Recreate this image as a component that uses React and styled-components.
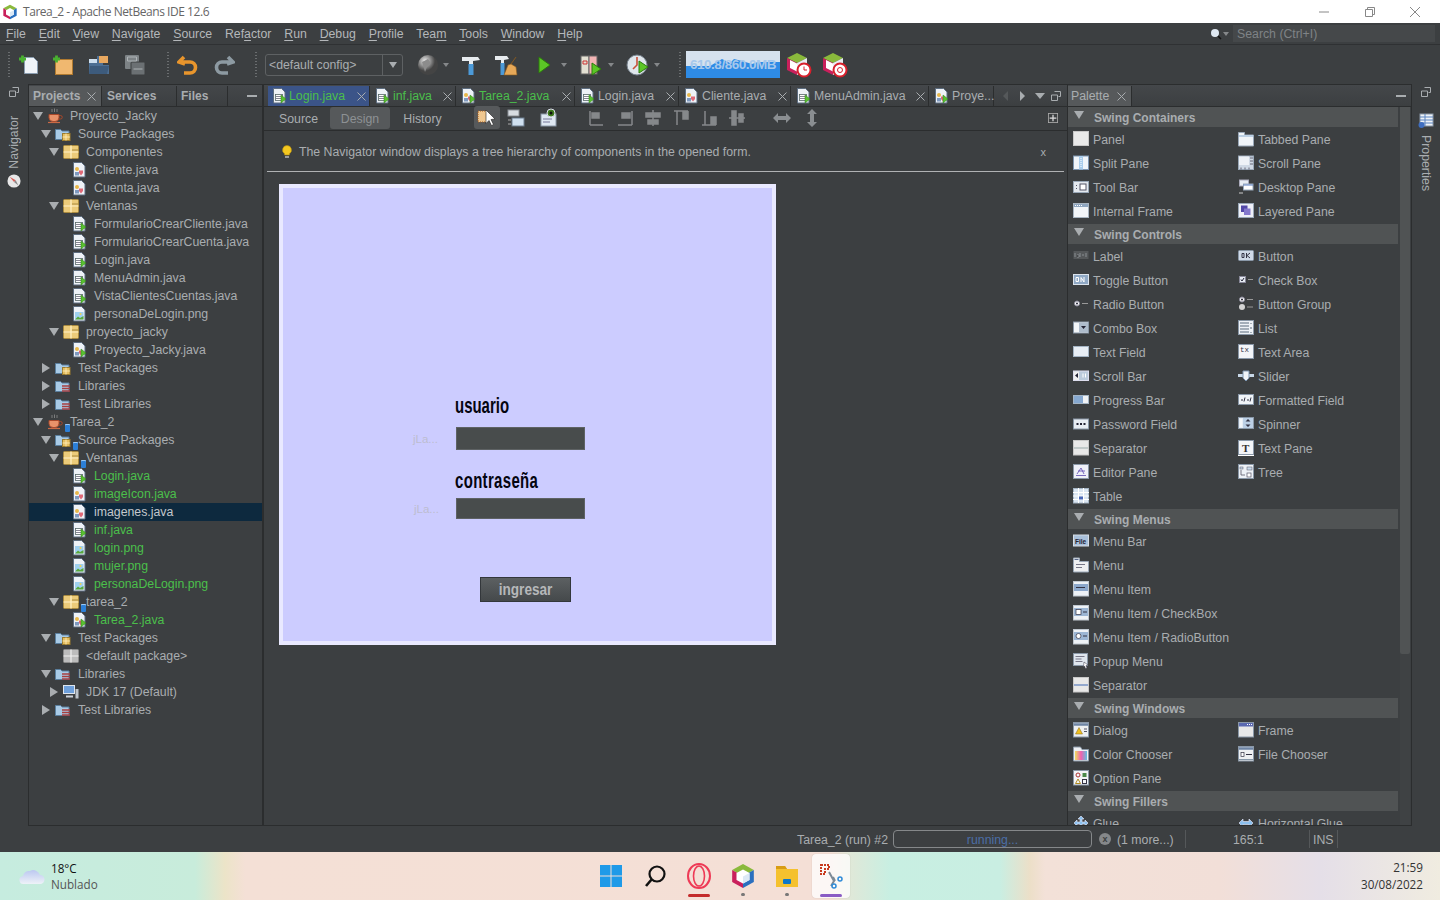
import React from "react";
import styled, { createGlobalStyle } from "styled-components";

const Global = createGlobalStyle`
  html, body { margin: 0; padding: 0; background: #3c3f41; }
  * { box-sizing: border-box; }
  #root { width: 1440px; height: 900px; overflow: hidden; }
`;

const Page = styled.div`
  width: 1440px; height: 900px; display: flex; flex-direction: column; overflow: hidden;
  background: #3c3f41; color: #a9adb0; font: 12.3px "Liberation Sans", Arial, sans-serif;
`;

/* ---------- shared drawings ---------- */
const Svg = ({ s = 16, w, h, vb, children }) => (
  <svg width={w || s} height={h || s} viewBox={vb || "0 0 16 16"} style={{ display: "block", flex: "none" }}>{children}</svg>
);
const Page16 = () => <path d="M2.5 .5h8l3.5 3.5v11h-11.500z" fill="#eef2f7" stroke="#5d6d80" />;
const Arrow = ({ x = 9, y = 7 }) => <path d={`M${x} ${y}l5 4-5 4z`} fill="#58c030" stroke="#2e7d14" strokeWidth=".5" />;
const Bean = () => <g><circle cx="6" cy="7" r="2" fill="#e8b84a" /><path d="M8 8.500h4v2.500l-2 2.500-2-2.500z" fill="#e06a78" /><rect x="4" y="10" width="4" height="3.500" fill="#7f9ac0" /></g>;
const Lines = () => <g><rect x="4.500" y="6.500" width="7" height="6" fill="#fff" stroke="#566" strokeWidth=".8" /><path d="M5 8.500h6M5 10.500h6" stroke="#667" strokeWidth=".8" /></g>;

const tree = {
  form: <><Page16 /><Lines /><Arrow x={10} y={7} /></>,
  cls: <><Page16 /><Bean /></>,
  main: <><Page16 /><Bean /><Arrow x={10} y={7} /></>,
  png: <><Page16 /><rect x="4" y="6" width="8.500" height="7.500" fill="#9fd0ef" /><path d="M4 13.500l3-3 2 1.500 3.500-2v3.500z" fill="#5aa83a" /><circle cx="9.500" cy="8" r="1" fill="#f4d34a" /></>,
  pkg: <><rect x=".5" y="1.500" width="15" height="13" rx="1" fill="#eccb7a" stroke="#a98a3f" /><path d="M.5 8h15M8 1.500v13" stroke="#fff2c8" strokeWidth="1.200" /><path d="M9 6h6" stroke="#a98a3f" /></>,
  emptyPkg: <><rect x=".5" y="1.500" width="15" height="13" rx="1" fill="#bcbcbc" stroke="#8a8a8a" /><path d="M.5 8h15M8 1.500v13" stroke="#efefef" strokeWidth="1.200" /></>,
  src: <><path d="M.5 3.500h5l1.500 1.500h7v8.500h-13.500z" fill="#a9cbe6" stroke="#5a7f9e" /><rect x="7.500" y="7.500" width="7.500" height="7" fill="#e6bf62" stroke="#9b7c2f" /><path d="M7.500 11h7.500M11 7.500v7" stroke="#fff1c0" strokeWidth=".8" /></>,
  lib: <><path d="M.5 3.500h5l1.500 1.500h7v8.500h-13.500z" fill="#a9cbe6" stroke="#5a7f9e" /><path d="M7 8h8M7 10.500h8M7 13h8" stroke="#a83f3f" strokeWidth="1.400" /></>,
  cup: <><path d="M2 6.500h10v3.500a4 4 0 0 1-4 3.500h-2a4 4 0 0 1-4-3.500z" fill="#e8926a" stroke="#a8482a" /><path d="M12 7.500h1.500a1.500 1.500 0 0 1 0 3.500h-2" fill="none" stroke="#a8482a" /><path d="M1 14.500h12" stroke="#c96a46" strokeWidth="1.200" /><path d="M5 1v3M7.500 .5v3.500M10 1v3" stroke="#999" strokeWidth=".7" /></>,
  jdk: <><rect x=".5" y="1.500" width="11" height="8" fill="#6ea0dc" stroke="#dfe6ee" /><path d="M3 11.500h7v2h-7z" fill="#cdd3da" /><rect x="12.500" y="5" width="3" height="9.500" fill="#bcc3cb" /></>,
};

const pal = {
  panel: <rect x=".5" y=".5" width="15" height="14" fill="#e9e9e9" stroke="#c8c8c8" />,
  tabbed: <><path d="M.5 4V1.500h6V4h9v11h-15z" fill="#f0f4f8" stroke="#9aa8b8" /><path d="M1 5h14" stroke="#bcd0e4" strokeWidth="2" /></>,
  split: <><rect x=".5" y="1" width="15" height="13.500" fill="#f0f5fa" stroke="#7d95b0" /><rect x="6" y="1" width="4" height="13.500" fill="#a9cdec" /><path d="M8 3v10" stroke="#fff" strokeDasharray="1 1" /></>,
  scrollp: <><rect x=".5" y="1" width="15" height="13.500" fill="#cfd9e5" stroke="#9aa8b8" /><rect x="1" y="1.500" width="10" height="8.500" fill="#eef2f7" /><path d="M12 3h3M12 6h3M12 9h3M3 12.500v2M7 12.500v2M11 12.500v2" stroke="#667" /></>,
  toolbar: <><rect x=".5" y="2.500" width="15" height="11" fill="#e3e8ee" stroke="#9aa8b8" /><rect x="7" y="5" width="6" height="6" fill="#fff" stroke="#556" /><path d="M3.500 6v1M3.500 9v1" stroke="#556" /></>,
  desktop: <><rect x="1.500" y="1" width="9" height="6" fill="#e8edf3" stroke="#aab" /><rect x="5.500" y="5" width="9.500" height="6" fill="#fff" stroke="#9ab" /><path d="M5.500 6h9.500" stroke="#5a7ec0" /><path d="M1 14h4" stroke="#ccc" /></>,
  iframe: <><rect x=".5" y=".5" width="15" height="14" fill="#f2f5f8" stroke="#a8b4c0" /><rect x="1" y="1" width="14" height="3" fill="#8fa6c0" /><path d="M2 2.500h8" stroke="#fff" strokeDasharray="1 1" /></>,
  layered: <><rect x=".5" y=".5" width="15" height="14" fill="#eef0f8" stroke="#9aa8b8" /><rect x="3" y="2.500" width="6.500" height="6.500" fill="#5248a8" /><rect x="6" y="5.500" width="6.500" height="6.500" fill="#8478cc" /></>,
  label: <><rect x=".5" y="3" width="15" height="8" fill="#55585a" /><path d="M2 5v4M4 7h2v2H4M7 5v4M9 7h2M13 5v4" stroke="#8a8e92" /></>,
  button: <><rect x=".5" y="2.500" width="15" height="10" rx="1" fill="#cfd9e8" stroke="#8a98a8" /><path d="M4 5.500h2v4H4zM8.500 5v5M12 5l-3 2.500 3 2.500" fill="none" stroke="#334" /></>,
  toggle: <><rect x=".5" y="2.500" width="15" height="10" fill="#8fa8c4" stroke="#dbe3ec" /><path d="M3 5.500h2.500v4H3zM8 10V5.500l3 4.500V5" fill="none" stroke="#fff" /></>,
  check: <><rect x="1.500" y="4.500" width="6" height="6" fill="#e6ebf2" stroke="#889" /><path d="M3 7.500l1 1.500 2-3" fill="none" stroke="#223" /><path d="M10 7.500h5" stroke="#999" /></>,
  radio: <><circle cx="4" cy="7.500" r="2.500" fill="#fff" stroke="#889" /><circle cx="4" cy="7.500" r="1" fill="#223" /><path d="M9 7.500h6" stroke="#999" /></>,
  group: <><circle cx="4" cy="3.500" r="2.500" fill="#fff" stroke="#889" /><circle cx="4" cy="3.500" r="1" fill="#223" /><circle cx="4" cy="11" r="3" fill="#d4d4d4" /><path d="M9 3.500h6M9 11h6" stroke="#999" /></>,
  combo: <><rect x=".5" y="2" width="15" height="11" fill="#f2f5f8" stroke="#8a98a8" /><rect x="6" y="2.500" width="9" height="10" fill="#aebccc" /><path d="M8 6h5l-2.500 3z" fill="#223" /></>,
  list: <><rect x=".5" y=".5" width="15" height="14" fill="#eef2f7" stroke="#8a98a8" /><path d="M2 3h9M2 6h9M2 9h9M2 12h9M13 3v1M13 7v2M13 12v1" stroke="#5a6a7c" /></>,
  textfield: <rect x=".5" y="2.500" width="15" height="10" fill="#e8eef5" stroke="#a4b4c4" />,
  textarea: <><rect x=".5" y=".5" width="15" height="14" fill="#f3f5f8" stroke="#8a98a8" /><text x="2" y="8" fontSize="7.500" fontFamily="Liberation Mono" fill="#334">tx</text></>,
  scrollbar: <><rect x=".5" y="3" width="15" height="9.500" fill="#bccbdc" stroke="#dde" /><rect x="1" y="3.500" width="5" height="8.500" fill="#f0f0f0" /><path d="M5 5v5l-3-2.500z" fill="#223" /><path d="M10 5.500v4M12.500 5.500v4" stroke="#fff" /></>,
  slider: <><path d="M0 6h16v3H0z" fill="#c8d8e8" /><path d="M5 3h6v7l-3 3-3-3z" fill="#f0f4f8" stroke="#7d95b0" /></>,
  progress: <><rect x=".5" y="3.500" width="15" height="8" fill="#f0f2f5" stroke="#a4b4c4" /><rect x="1" y="4" width="9" height="7" fill="#86a8d0" /></>,
  formatted: <><rect x=".5" y="2.500" width="15" height="10" fill="#f0f4f8" stroke="#8a98a8" /><path d="M3 8h2M6 9.500l1-4M9 8h2M12 9.500l1-4" stroke="#334" /></>,
  password: <><rect x=".5" y="3" width="15" height="10" fill="#e8edf3" stroke="#8a98a8" /><path d="M3.500 8h2M7 8h2M10.500 8h2" stroke="#223" strokeWidth="2" /></>,
  spinner: <><rect x=".5" y="1.500" width="15" height="11" fill="#e6edf5" stroke="#8a98a8" /><rect x="5" y="2" width="10" height="10" fill="#bcd0e6" /><path d="M10 3l2.500 2.500h-5zM10 11l2.500-2.500h-5z" fill="#334" /><path d="M3 3v8" stroke="#fff" /></>,
  separator: <><rect x=".5" y=".5" width="15" height="14.500" fill="#e8e8e8" stroke="#c8c8c8" /><path d="M1 8h14" stroke="#9aa" /></>,
  separatorBlue: <><rect x=".5" y=".5" width="15" height="14.500" fill="#e8e8e8" stroke="#c8c8c8" /><path d="M1 8h14" stroke="#3f68b4" /></>,
  textpane: <><rect x=".5" y=".5" width="15" height="14" fill="#f3f5f8" stroke="#8a98a8" /><text x="4" y="12" fontSize="11" fontWeight="700" fontFamily="Liberation Serif" fill="#333">T</text><path d="M0 15.500h16" stroke="#fff" /></>,
  tree: <><rect x=".5" y=".5" width="15" height="14" fill="#eef2f7" stroke="#8a98a8" /><rect x="2" y="3" width="3" height="2" fill="#cde" stroke="#556" strokeWidth=".5" /><rect x="9" y="3" width="5" height="3" fill="#cde" stroke="#556" strokeWidth=".5" /><rect x="9" y="9" width="4" height="4" fill="#fff" stroke="#556" strokeWidth=".7" /><path d="M3 6v5h4" fill="none" stroke="#556" strokeWidth=".8" /></>,
  editor: <><rect x=".5" y=".5" width="15" height="14" fill="#eef0f8" stroke="#8a98a8" /><path d="M4 10l4-6 3 6M3 11.500h10M5 7h7" fill="none" stroke="#5a48b0" strokeWidth=".8" /></>,
  table: <><rect x=".5" y=".5" width="15" height="14.500" fill="#dbe6f2" stroke="#a4b4c4" /><path d="M0 4.500h16M0 8h16M0 11.500h16M5.500 0v15M10.500 0v15" stroke="#fff" /><rect x="6" y="8.500" width="4" height="3" fill="#4a68b8" /></>,
  menubar: <><rect x=".5" y="2" width="15" height="11" fill="#a9c0da" stroke="#d6dde6" /><text x="2" y="10.500" fontSize="6.500" fontWeight="700" fontFamily="Liberation Sans" fill="#223">File</text></>,
  menu: <><path d="M.5 4.500V1h6v3.500h9V15H.5z" fill="#eef0f2" stroke="#9aa8b8" /><path d="M1.500 2.500h4" stroke="#5a6a8c" /><path d="M3 7.500h9M3 10.500h6" stroke="#778" /></>,
  menuitem: <><rect x=".5" y=".5" width="15" height="14.500" fill="#eef2f6" stroke="#c0c8d0" /><rect x="1" y="3" width="14" height="7" fill="#8ca8cc" /><path d="M3 6.500h9" stroke="#334" /></>,
  menucheck: <><rect x=".5" y=".5" width="15" height="14.500" fill="#eef2f6" stroke="#c0c8d0" /><rect x="1" y="3" width="14" height="8" fill="#9cb6d4" /><rect x="3" y="4.500" width="5" height="5" fill="#fff" stroke="#334" strokeWidth=".7" /><path d="M10 7h4" stroke="#334" /></>,
  menuradio: <><rect x=".5" y=".5" width="15" height="14.500" fill="#eef2f6" stroke="#c0c8d0" /><rect x="1" y="3" width="14" height="8" fill="#9cb6d4" /><circle cx="5.500" cy="7" r="2.500" fill="#fff" stroke="#334" strokeWidth=".7" /><path d="M10 7h4" stroke="#334" /></>,
  popup: <><rect x=".5" y=".5" width="14" height="12" fill="#dfe6ee" stroke="#8a98a8" /><path d="M2.500 3.500h9M2.500 6h6M2.500 8.500h7" stroke="#778" /><path d="M11 9l4 3-2 .5 1 2.500-1.500.5-1-2.500-1 1z" fill="#fff" stroke="#334" strokeWidth=".5" /></>,
  dialog: <><rect x=".5" y=".5" width="15" height="14.500" fill="#eef0f2" stroke="#8a98a8" /><path d="M1 2.500h14" stroke="#6d84a4" strokeWidth="2.500" /><path d="M6 5.500l3.500 6.500h-7z" fill="#f0c020" stroke="#806010" strokeWidth=".5" /><path d="M11 7h3M11 9.500h3" stroke="#556" /></>,
  frame: <><rect x=".5" y=".5" width="15" height="14.500" fill="#e8e8e8" stroke="#8a98a8" /><rect x="1" y="1" width="14" height="3.500" fill="#5a68b0" /><path d="M9 2.500h5" stroke="#fff" strokeDasharray="1 1" /></>,
  color: <><defs><linearGradient id="rb" x1="0" x2="1"><stop offset="0" stopColor="#f0e060" /><stop offset=".5" stopColor="#f060b0" /><stop offset="1" stopColor="#60c0e0" /></linearGradient></defs><path d="M.5 3.500V1h7l1.500 2.500h6.500V15H.5z" fill="#eef0f4" stroke="#8a98a8" /><rect x="2" y="5" width="12" height="9" fill="url(#rb)" /></>,
  file: <><rect x=".5" y=".5" width="15" height="14.500" fill="#eef0f2" stroke="#8a98a8" /><path d="M1 2.500h14" stroke="#6d84a4" strokeWidth="2.500" /><rect x="3" y="6.500" width="3" height="4" fill="#fff" stroke="#334" strokeWidth=".7" /><path d="M8 8.500h6" stroke="#334" /><path d="M1 13.500h14" stroke="#89a" /></>,
  option: <><rect x=".5" y=".5" width="15" height="14.500" fill="#f3f5f8" stroke="#8a98a8" /><circle cx="5" cy="5" r="2" fill="none" stroke="#a33" /><rect x="9.500" y="3" width="4" height="4" fill="#4a8a4a" /><path d="M5 9l2.500 4.500h-5z" fill="none" stroke="#b08a20" /><rect x="9.500" y="9.500" width="4" height="4" fill="none" stroke="#334" /></>,
  glue: <path d="M8 1l3 3H9v3h3V5l3 3-3 3V9H9v3h2l-3 3-3-3h2V9H4v2L1 8l3-3v2h3V4H5z" fill="#8cc0ee" stroke="#eef" strokeWidth=".6" />,
  hglue: <path d="M1 8l4-4v2.500h6V4l4 4-4 4V9.500H5V12z" fill="#8cc0ee" stroke="#eef" strokeWidth=".6" />,
};

/* ---------- title bar ---------- */
const TitleBar = styled.header`
  height: 23px; flex: none; background: #fff; display: flex; align-items: center; padding-left: 2px;
`;
const TitleText = styled.span`
  margin-left: 5px; font: 12px "Open Sans", sans-serif; color: #666; letter-spacing: -.45px;
`;
const WinControls = styled.div`
  margin-left: auto; margin-right: 2px; display: flex; align-items: center; height: 100%;
`;
const WinBtn = styled.span`
  width: 45.500px; height: 100%; display: flex; align-items: center; justify-content: center;
`;
const Logo = ({ s = 16 }) => (
  <Svg s={s} vb="0 0 24 24">
    <path d="M12 1L22 6.500 12 12 2 6.500z" fill="#8ab93c" />
    <path d="M2 6.500L12 12v11L2 17.500z" fill="#c9205c" />
    <path d="M22 6.500L12 12v11l10-5.500z" fill="#2a6fbf" />
    <path d="M12 6l6 3.300v6.400L12 19l-6-3.300V9.300z" fill="#fff" />
    <path d="M12 12.500l6-3.200v6.400L12 19z" fill="#dce9f5" />
  </Svg>
);

/* ---------- menu bar ---------- */
const MenuBar = styled.nav`
  height: 22px; flex: none; display: flex; align-items: center; padding: 0 0 0 6px; gap: 12.800px;
  background: #3c3f41; border-bottom: 1px solid #2f3133; color: #b4b7ba;
`;
const MenuItem = styled.span` u { text-underline-offset: 2px; } `;
const SearchWrap = styled.div`
  margin-left: auto; display: flex; align-items: center; height: 17px; margin-right: 5px;
`;
const SearchInput = styled.div`
  width: 202px; height: 17px; margin-left: 4px; background: #45484a; color: #7f8386; padding-left: 4px; line-height: 18px;
`;

/* ---------- main toolbar ---------- */
const ToolBar = styled.div`
  height: 39px; flex: none; display: flex; align-items: center; padding-left: 8px; background: #3c3f41;
`;
const Grip = styled.i`
  width: 2px; height: 26px; flex: none; margin: ${p => p.$m || "0"};
  background-image: linear-gradient(#6a6d6f 50%, transparent 50%); background-size: 2px 3px;
`;
const ToolBtn = styled.span`
  width: ${p => p.$w || 35}px; height: 30px; flex: none; display: flex; align-items: center; justify-content: center;
  margin-left: ${p => p.$ml || 0}px;
`;
const Drop = styled.i`
  width: 0; height: 0; flex: none; margin-left: ${p => p.$ml || 0}px; border: 3.5px solid transparent; border-top: 4px solid #85888a; border-bottom: 0;
`;
const Combo = styled.div`
  width: 138px; height: 22px; margin-left: 8px; border: 1px solid #5e6163; border-radius: 3px; display: flex; align-items: center;
  padding-left: 3px; color: #a9adb0; flex: none;
`;
const ComboArrow = styled.span`
  margin-left: auto; width: 20px; height: 100%; border-left: 1px solid #5e6163; display: flex; align-items: center; justify-content: center;
  &::after { content: ""; border: 4.500px solid transparent; border-top: 6px solid #a9adb0; border-bottom: 0; }
`;
const MemBar = styled.div`
  width: 94px; height: 27px; margin-left: 5px; position: relative; background: #2e8be6; flex: none; overflow: hidden;
  display: flex; align-items: center; justify-content: center;
`;
const MemGraph = styled.svg` position: absolute; inset: 0; `;
const MemText = styled.span`
  position: relative; font-weight: 700; font-size: 13.5px; letter-spacing: -.5px; color: #a6c8ec;
`;

/* ---------- workspace ---------- */
const Workspace = styled.main` flex: 1; display: flex; min-height: 0; `;
const Strip = styled.aside`
  width: ${p => p.$w}px; flex: none; display: flex; flex-direction: column; align-items: center;
`;
const RestoreGlyph = styled.span` height: 16px; display: flex; align-items: center; `;
const StripIcon = styled.span` margin-top: ${p => p.$mt}px; display: block; `;
const VText = styled.span`
  writing-mode: vertical-rl; color: #a9adb0; margin-top: ${p => p.$mt || 0}px;
  transform: ${p => (p.$flip ? "rotate(180deg)" : "none")};
`;
const Restore = () => (
  <Svg s={10} vb="0 0 10 10"><path d="M3.500.5h6v5h-2M.5 4h6v5.500h-6z" fill="none" stroke="#a9adb0" /></Svg>
);

const Panel = styled.section`
  display: flex; flex-direction: column; min-width: 0; border-bottom: 1px solid #2b2d2e;
  width: ${p => (p.$w ? p.$w + "px" : "auto")}; flex: ${p => (p.$w ? "none" : "1")};
  border-left: 1px solid #2b2d2e; border-right: ${p => (p.$right ? "1px solid #2b2d2e" : "0")};
`;
const TabRow = styled.div`
  height: 23px; flex: none; display: flex; align-items: stretch; border-bottom: 1px solid #2b2d2e; padding-top: 1px;
  border-top: 1px solid #2b2d2e; background: linear-gradient(#44474a, #3c3f41);
`;
const SideTab = styled.div`
  width: ${p => p.$w}px; display: flex; align-items: center; padding-left: ${p => p.$pl || 4}px; flex: none; font-weight: 700; font-size: 12px;
  color: #a9adb0; border-right: 1px solid #2b2d2e; background: ${p => (p.$on ? "#56595b" : "transparent")};
`;
const PaletteTabLabel = styled.span` font-weight: 400; font-size: 12.3px; `;
const CloseX = styled.span` margin-left: auto; margin-right: ${p => p.$mr}px; display: flex; `;
const Close = ({ mr = 5 }) => <CloseX $mr={mr}><Svg s={9} vb="0 0 9 9"><path d="M.5.5l8 8M8.500.5l-8 8" stroke="#a9adb0" /></Svg></CloseX>;
const Dash = styled.i`
  margin: auto 5px auto auto; width: 10px; height: 2px; background: #a9adb0; flex: none;
`;

/* ---------- tree ---------- */
const TreeList = styled.div` flex: 1; overflow: hidden; `;
const TreeRow = styled.div`
  height: 18px; display: flex; align-items: center; padding-left: ${p => 4 + p.$level * 8}px;
  background: ${p => (p.$sel ? "#0d293e" : "transparent")};
  color: ${p => (p.$green ? "#4bbf4b" : p.$sel ? "#c4c8cc" : "#a9adb0")};
`;
const Twist = styled.span`
  width: 14px; flex: none; display: flex; justify-content: flex-start;
  &::after {
    content: ""; display: block;
    ${p => p.$open === true && "border: 5px solid transparent; border-top: 8px solid #a9adb0; border-bottom: 0;"}
    ${p => p.$open === false && "border: 5px solid transparent; border-left: 8px solid #a9adb0; border-right: 0; margin-left: 1px;"}
  }
`;
const TreeIcon = styled.span` position: relative; width: 16px; height: 16px; flex: none; margin-right: 7px; `;
const Badge = styled.span`
  position: absolute; right: -7px; bottom: -2px; width: 5px; height: 8px; background: #2c7fd6; border-radius: 1px;
  box-shadow: inset 0 1px #9cc9f2;
`;

const T = (level, open, icon, label, o = {}) => ({ level, open, icon, label, ...o });
const rows = [
  T(0, true, "cup", "Proyecto_Jacky"),
  T(1, true, "src", "Source Packages"),
  T(2, true, "pkg", "Componentes"),
  T(3, null, "cls", "Cliente.java"),
  T(3, null, "cls", "Cuenta.java"),
  T(2, true, "pkg", "Ventanas"),
  T(3, null, "form", "FormularioCrearCliente.java"),
  T(3, null, "form", "FormularioCrearCuenta.java"),
  T(3, null, "form", "Login.java"),
  T(3, null, "form", "MenuAdmin.java"),
  T(3, null, "form", "VistaClientesCuentas.java"),
  T(3, null, "png", "personaDeLogin.png"),
  T(2, true, "pkg", "proyecto_jacky"),
  T(3, null, "main", "Proyecto_Jacky.java"),
  T(1, false, "src", "Test Packages"),
  T(1, false, "lib", "Libraries"),
  T(1, false, "lib", "Test Libraries"),
  T(0, true, "cup", "Tarea_2", { badge: 1 }),
  T(1, true, "src", "Source Packages", { badge: 1 }),
  T(2, true, "pkg", "Ventanas", { badge: 1 }),
  T(3, null, "form", "Login.java", { green: 1 }),
  T(3, null, "cls", "imageIcon.java", { green: 1 }),
  T(3, null, "cls", "imagenes.java", { sel: 1 }),
  T(3, null, "form", "inf.java", { green: 1 }),
  T(3, null, "png", "login.png", { green: 1 }),
  T(3, null, "png", "mujer.png", { green: 1 }),
  T(3, null, "png", "personaDeLogin.png", { green: 1 }),
  T(2, true, "pkg", "tarea_2", { badge: 1 }),
  T(3, null, "main", "Tarea_2.java", { green: 1 }),
  T(1, true, "src", "Test Packages"),
  T(2, null, "emptyPkg", "<default package>"),
  T(1, true, "lib", "Libraries"),
  T(2, false, "jdk", "JDK 17 (Default)"),
  T(1, false, "lib", "Test Libraries"),
];

/* ---------- editor ---------- */
const EditorTab = styled.div`
  width: ${p => p.$w}px; flex: none; display: flex; align-items: center;
  padding-left: ${p => (p.$on ? 3 : 4)}px; gap: ${p => (p.$on ? 2 : 3)}px;
  border-right: 1px solid #2b2d2e; background: ${p => (p.$on ? "#3b5488" : "transparent")};
  color: ${p => (p.$green ? "#4bbf4b" : "#a9adb0")};
`;
const TabSpacer = styled.span` width: 4px; flex: none; `;
const TabNav = styled.div` margin-left: auto; display: flex; align-items: center; gap: 6px; padding-right: 6px; `;
const NavArrow = styled.i`
  width: 0; height: 0; border: 5px solid transparent; border-right: 0; border-left: 5px solid ${p => p.$c || "#a9adb0"};
  margin-right: ${p => p.$mr}px; transform: ${p => (p.$flip ? "scaleX(-1)" : "none")};
`;
const NavDrop = styled.i` width: 0; height: 0; border: 5px solid transparent; border-bottom: 0; border-top: 6px solid #a9adb0; `;
const DesignBar = styled.div`
  height: 24px; flex: none; display: flex; align-items: center; padding-left: 3px; border-bottom: 1px solid #2b2d2e;
`;
const ViewTab = styled.span`
  width: ${p => p.$w}px; height: 22px; flex: none; display: flex; align-items: center; justify-content: center; border-radius: 3px;
  margin-left: ${p => p.$ml || 0}px; margin-top: -1px; padding-top: 1px;
  background: ${p => (p.$on ? "#56595b" : "transparent")}; color: ${p => (p.$on ? "#8d9194" : "#a9adb0")};
`;
const DesignBtn = styled.span`
  width: ${p => p.$w || 28}px; height: 23px; flex: none; display: flex; align-items: center; justify-content: center; border-radius: 3px;
  margin: -2px 0 0 ${p => p.$ml || 0}px; background: ${p => (p.$on ? "#56595b" : "transparent")};
`;
const Hint = styled.div`
  height: 41px; flex: none; margin: 0 3px; border-bottom: 1px solid #b0b2b4; display: flex; align-items: center; padding: 2px 0 0 13px; gap: 5px;
`;
const HintClose = styled.span` margin-left: auto; margin-right: 18px; font-size: 11px; `;
const Canvas = styled.div` flex: 1; padding: 12px 0 0 15px; overflow: hidden; `;
const FormFrame = styled.div`
  width: 497px; height: 461px; border: 4px solid #e9e9ff; background: #ccccff; position: relative;
`;
const Placed = styled.div`
  position: absolute; left: ${p => p.$x}px; top: ${p => p.$y}px;
`;
const HandLabel = styled(Placed)`
  font: 700 22px "Liberation Sans", sans-serif; color: #050510; line-height: 18px; white-space: nowrap;
  transform: scaleX(.68); transform-origin: left center; letter-spacing: ${p => p.$ls || 0}px;
`;
const GhostLabel = styled(Placed)` font-size: 11.5px; color: #bdbdd0; line-height: 14px; `;
const FormField = styled(Placed)`
  width: 129px; height: ${p => p.$h}px; background: #484c4c; border: 1px solid #5e6264;
`;
const FormButton = styled(Placed)`
  width: 91px; height: 25px; display: flex; align-items: center; justify-content: center; border: 1px solid #33373b;
  background: linear-gradient(#5c6062, #45494b);
`;
const ButtonLabel = styled.span`
  display: inline-block; transform: scaleX(.8); color: #b6b8ba; font: 700 17px "Liberation Sans", sans-serif; line-height: 18px;
`;

/* ---------- palette ---------- */
const PaletteBody = styled.div` flex: 1; display: flex; min-height: 0; `;
const PaletteList = styled.div` width: 330px; flex: none; overflow: hidden; `;
const Track = styled.div` width: 10px; flex: none; margin-left: 2px; background: #3f4244; `;
const Thumb = styled.div` height: 547px; background: #505354; border-radius: 0 0 2px 2px; `;
const SectionHead = styled.div`
  height: 20px; margin-top: ${p => (p.$first ? 0 : 1)}px; background: #505354; display: flex; align-items: center;
  padding: 1px 0 0 6px; font-weight: 700; font-size: 12px; color: #a9adb0;
`;
const SectionTri = styled.i`
  width: 0; height: 0; flex: none; margin: -6px 10px 0 0; border: 5.500px solid transparent; border-top: 8px solid #a9adb0; border-bottom: 0;
`;
const PalGrid = styled.div` display: grid; grid-template-columns: 165px 1fr; padding-left: 5px; `;
const PalItem = styled.div`
  height: 24px; display: flex; align-items: center; gap: 4px; color: #a9adb0;
`;
const PalLabel = styled.span` padding-top: 2px; `;
const sections = [
  ["Swing Containers", [["panel", "Panel"], ["tabbed", "Tabbed Pane"], ["split", "Split Pane"], ["scrollp", "Scroll Pane"], ["toolbar", "Tool Bar"], ["desktop", "Desktop Pane"], ["iframe", "Internal Frame"], ["layered", "Layered Pane"]]],
  ["Swing Controls", [["label", "Label"], ["button", "Button"], ["toggle", "Toggle Button"], ["check", "Check Box"], ["radio", "Radio Button"], ["group", "Button Group"], ["combo", "Combo Box"], ["list", "List"], ["textfield", "Text Field"], ["textarea", "Text Area"], ["scrollbar", "Scroll Bar"], ["slider", "Slider"], ["progress", "Progress Bar"], ["formatted", "Formatted Field"], ["password", "Password Field"], ["spinner", "Spinner"], ["separator", "Separator"], ["textpane", "Text Pane"], ["editor", "Editor Pane"], ["tree", "Tree"], ["table", "Table"]]],
  ["Swing Menus", [["menubar", "Menu Bar", 1], ["menu", "Menu", 1], ["menuitem", "Menu Item", 1], ["menucheck", "Menu Item / CheckBox", 1], ["menuradio", "Menu Item / RadioButton", 1], ["popup", "Popup Menu", 1], ["separatorBlue", "Separator", 1]]],
  ["Swing Windows", [["dialog", "Dialog"], ["frame", "Frame"], ["color", "Color Chooser"], ["file", "File Chooser"], ["option", "Option Pane"]]],
  ["Swing Fillers", [["glue", "Glue"], ["hglue", "Horizontal Glue"]]],
];
const FullCell = styled.div` grid-column: 1 / -1; `;

/* ---------- status & task bars ---------- */
const StatusBar = styled.footer`
  height: 26px; flex: none; display: flex; align-items: center; justify-content: flex-end; color: #a9adb0;
`;
const StatusText = styled.span` padding-top: 2px; `;
const Progress = styled.div`
  width: 199px; height: 18px; margin-left: 5px; border: 1px solid #85888a; border-radius: 4px; text-align: center; color: #4b6ea6; line-height: 18px;
`;
const StatusClose = styled.span`
  width: 12px; height: 12px; margin-left: 7px; border-radius: 50%; background: #85888a; color: #3c3f41; font: 700 9px/12px "Liberation Sans", sans-serif; text-align: center; flex: none;
`;
const StatusCell = styled.span`
  width: ${p => p.$w}px; height: 18px; flex: none; line-height: 20px; text-align: left; padding-left: ${p => p.$pl || 0}px;
  border-right: ${p => (p.$line ? "1px solid #55585a" : "0")};
`;
const Taskbar = styled.footer`
  height: 48px; flex: none; display: flex; align-items: center; position: relative; color: #111; font: 11.7px "Open Sans", sans-serif;
  background: linear-gradient(90deg, #c6ecdf 0, #c8ecdb 195px, #ece4c8 225px, #f4e0d6 245px, #f4dfd6 830px, #e0e8d8 850px, #c8efe2 890px, #c9eee2 1000px, #ecdfc8 1030px, #f3e1d8 1045px, #f2dfd8 1220px, #e5dfe8 1320px, #f0ece0 1440px);
`;
const Weather = styled.div` display: flex; align-items: center; margin-left: 19px; gap: 6px; width: 570px; `;
const WeatherText = styled.div` line-height: 16px; span { display: block; } span + span { color: #555; } `;
const TaskIcons = styled.div` display: flex; `;
const TaskIcon = styled.div`
  width: ${p => p.$w || 44}px; height: 44px; display: flex; align-items: center; justify-content: center; position: relative; flex: none; border-radius: 4px;
  margin-left: ${p => p.$ml || 0}px;
  ${p => p.$on && "background: rgba(255,255,255,.75); box-shadow: 0 0 1px rgba(0,0,0,.25);"}
`;
const TaskDot = styled.i`
  position: absolute; bottom: ${p => (p.$bar ? 1 : 2)}px; left: 50%; transform: translateX(-50%); height: 3px; border-radius: 2px;
  width: ${p => (p.$bar ? 22 : 4)}px; background: ${p => p.$c || "#777"};
`;
const Clock = styled.div`
  margin-left: auto; margin-right: 17px; text-align: right; line-height: 17px; color: #333; span { display: block; }
`;

const alignIcons = [
  ["M2 2v14M2 16h13M4 4h7v5H4z", 21],
  ["M16 2v14M2 16h14M6 4h8v5H6z"],
  ["M9 1v16M2 4h14v4H2zM4 11h10v4H4z"],
  ["M2 2h14M5 2v14M11 2v8h5V2"],
  ["M2 16h14M5 2v14M11 16V8h5v8"],
  ["M1 9h16M4 2h4v14H4zM11 5h4v8h-4z"],
];

export default function App() {
  return (
    <Page>
      <Global />
      <TitleBar>
        <Logo />
        <TitleText>Tarea_2 - Apache NetBeans IDE 12.6</TitleText>
        <WinControls>
          <WinBtn><Svg s={12} vb="0 0 12 12"><path d="M1 6h10" stroke="#888" /></Svg></WinBtn>
          <WinBtn><Svg s={12} vb="0 0 12 12"><path d="M1.500 3.500h7v7h-7zM3.500 3V1.500h7v7H9" fill="none" stroke="#888" /></Svg></WinBtn>
          <WinBtn><Svg s={12} vb="0 0 12 12"><path d="M1 1l10 10M11 1L1 11" stroke="#888" /></Svg></WinBtn>
        </WinControls>
      </TitleBar>

      <MenuBar>
        {[["F", "ile"], ["E", "dit"], ["V", "iew"], ["N", "avigate"], ["S", "ource"]].map(([u, r]) => <MenuItem key={u}><u>{u}</u>{r}</MenuItem>)}
        <MenuItem>Ref<u>a</u>ctor</MenuItem>
        <MenuItem><u>R</u>un</MenuItem>
        <MenuItem><u>D</u>ebug</MenuItem>
        <MenuItem><u>P</u>rofile</MenuItem>
        <MenuItem>Tea<u>m</u></MenuItem>
        <MenuItem><u>T</u>ools</MenuItem>
        <MenuItem><u>W</u>indow</MenuItem>
        <MenuItem><u>H</u>elp</MenuItem>
        <SearchWrap>
          <Svg s={12} vb="0 0 12 12"><circle cx="5" cy="5" r="4" fill="#dfe8f2" /><path d="M8 8l3 3" stroke="#111" strokeWidth="1.500" /></Svg>
          <Drop $ml={1} />
          <SearchInput>Search (Ctrl+I)</SearchInput>
        </SearchWrap>
      </MenuBar>

      <ToolBar>
        <Grip />
        <ToolBtn $ml={2}><Svg s={22} vb="0 0 22 22"><path d="M5.500 3.500h9l4 4v12h-13z" fill="#f0f4f9" stroke="#8a9db0" /><path d="M0 5h7M3.500 1.500v7" stroke="#49b030" strokeWidth="2.800" /></Svg></ToolBtn>
        <ToolBtn $ml={-1}><Svg s={22} vb="0 0 22 22"><rect x="2.500" y="5.500" width="17" height="15" fill="#f0b870" stroke="#b07a30" /><path d="M0 5h7M3.500 1.500v7" stroke="#49b030" strokeWidth="2.800" /></Svg></ToolBtn>
        <ToolBtn><Svg s={22} vb="0 0 22 22"><path d="M1 7h8v-5h6v9H21v9H1z" fill="#4d6f94" /><path d="M1 5h8v4H1z" fill="#cfe0f0" /><rect x="11" y="2" width="9" height="7" fill="#e8a860" /><path d="M2 12h19l-2 8H1z" fill="#3d5b7c" /></Svg></ToolBtn>
        <ToolBtn $ml={1}><Svg s={22} vb="0 0 22 22"><rect x="1" y="1" width="14" height="14" rx="1" fill="#7d8386" /><rect x="7" y="8" width="14" height="13" rx="1" fill="#6b7073" stroke="#3c3f41" /><path d="M3.500 3h9v4h-9zM9.500 15h9" stroke="#aeb3b6" fill="none" /></Svg></ToolBtn>
        <Grip $m="0 0 0 15px" />
        <ToolBtn $ml={2}><Svg s={24} vb="0 0 24 24"><path d="M7 4l-5 5 6 2M3 9h10a5.500 5.500 0 0 1 0 11H7" fill="none" stroke="#e8952c" strokeWidth="3.600" /></Svg></ToolBtn>
        <ToolBtn $ml={-1}><Svg s={24} vb="0 0 24 24"><path d="M17 4l5 5-6 2M21 9H11a5.500 5.500 0 0 0 0 11h6" fill="none" stroke="#8d9aa2" strokeWidth="3.600" /></Svg></ToolBtn>
        <Grip $m="0 0 0 15px" />
        <Combo>&lt;default config&gt;<ComboArrow /></Combo>
        <ToolBtn $ml={8} $w={34}><Svg s={22} vb="0 0 22 22"><defs><radialGradient id="gl" cx=".35" cy=".3"><stop offset="0" stopColor="#eee" /><stop offset="1" stopColor="#444" /></radialGradient></defs><circle cx="11" cy="11" r="10" fill="url(#gl)" /><path d="M5 8l6-3 3 4-4 4-2 5z" fill="#8c8c8c" /></Svg></ToolBtn>
        <Drop $ml={-2} />
        <ToolBtn $w={35} $ml={4}><Svg s={22} vb="0 0 22 22"><path d="M2 3h16l2 3-7 1v3H9V7L2 7z" fill="#e8ecef" /><rect x="8.500" y="10" width="5" height="11" fill="#4c9ad8" /></Svg></ToolBtn>
        <ToolBtn><Svg s={24} vb="0 0 24 24"><path d="M1 3h12l2 3-5 1v3H7V7H1z" fill="#e8ecef" /><rect x="6.500" y="10" width="4" height="12" fill="#4c9ad8" /><path d="M22 4l-5 7 5 3 1 8H10l4-10 3-1z" fill="#e6a858" stroke="#8a5a20" strokeWidth=".6" /></Svg></ToolBtn>
        <ToolBtn $ml={3}><Svg s={22} vb="0 0 22 22"><path d="M6 3l11 8-11 8z" fill="#5cc626" stroke="#2b7a0d" /></Svg></ToolBtn>
        <Drop $ml={0} />
        <ToolBtn $ml={6} $w={36}><Svg s={24} vb="0 0 24 24"><rect x="2" y="3" width="8" height="18" fill="#e3e0d2" stroke="#666" /><rect x="10" y="3" width="8" height="18" fill="#f2b4b4" stroke="#666" /><path d="M4 8h4v3H4z" fill="none" stroke="#c33" /><path d="M13 10l9 6-9 6z" fill="#5cc626" stroke="#2b7a0d" /></Svg></ToolBtn>
        <Drop $ml={-1} />
        <ToolBtn $ml={6} $w={36}><Svg s={24} vb="0 0 24 24"><circle cx="11" cy="12" r="10" fill="#dfe6ec" stroke="#7a8590" /><path d="M11 4v8l-4 4" fill="none" stroke="#c8503a" strokeWidth="1.600" /><path d="M13 8l9 6-9 6z" fill="#5cc626" stroke="#2b7a0d" /></Svg></ToolBtn>
        <Drop $ml={-2} />
        <Grip $m="0 0 0 19px" />
        <MemBar>
          <MemGraph width="94" height="27" viewBox="0 0 94 27"><path d="M0 0h94v11H72l-6 2-10-3-8-2-4 4-8-4-12 7H0z" fill="#d6e2ee" /></MemGraph>
          <MemText>610.8/860.0MB</MemText>
        </MemBar>
        <ToolBtn $ml={0} $w={37}><Svg s={26} vb="0 0 26 26"><path d="M11 1l10 5-10 5L1 6z" fill="#8ab93c" /><path d="M1 6l10 5v12L1 18z" fill="#c9205c" /><path d="M4 8l7 3.500v8L4 16z" fill="#fff" /><path d="M21 6l-10 5v12l10-5z" fill="#e8edf2" /><circle cx="18" cy="18" r="6.500" fill="#fff" stroke="#d8202c" strokeWidth="2" /><path d="M18 14.500V18h3" fill="none" stroke="#d8202c" /></Svg></ToolBtn>
        <ToolBtn $w={36}><Svg s={26} vb="0 0 26 26"><path d="M11 1l10 5-10 5L1 6z" fill="#8ab93c" /><path d="M1 6l10 5v12L1 18z" fill="#c9205c" /><path d="M4 8l7 3.500v8L4 16z" fill="#fff" /><path d="M21 6l-10 5v12l10-5z" fill="#e8edf2" /><circle cx="18" cy="18" r="6.500" fill="#fff" stroke="#d8202c" strokeWidth="2" /><circle cx="18" cy="18" r="2.500" fill="none" stroke="#d8202c" /></Svg></ToolBtn>
      </ToolBar>

      <Workspace>
        <Strip $w={28}>
          <RestoreGlyph><Restore /></RestoreGlyph>
          <VText $flip $mt={16}>Navigator</VText>
          <StripIcon $mt={5}><Svg s={14} vb="0 0 16 16"><circle cx="8" cy="8" r="7.500" fill="#e8e8e8" /><path d="M3 3l7 4-2 2z" fill="#d8605a" /><path d="M13 13l-5-4 2-2z" fill="#8a8a8a" /></Svg></StripIcon>
        </Strip>

        <Panel $w={235} $right>
          <TabRow>
            <SideTab $w={73} $on>Projects<Close /></SideTab>
            <SideTab $w={75} $pl={5}>Services</SideTab>
            <SideTab $w={51} $pl={4}>Files</SideTab>
            <Dash />
          </TabRow>
          <TreeList>
            {rows.map((r, i) => (
              <TreeRow key={i} $level={r.level} $green={r.green} $sel={r.sel}>
                <Twist $open={r.open} />
                <TreeIcon>
                  <Svg>{tree[r.icon]}</Svg>
                  {r.badge && <Badge />}
                </TreeIcon>
                {r.label}
              </TreeRow>
            ))}
          </TreeList>
        </Panel>

        <Panel>
          <TabRow>
            <TabSpacer />
            <EditorTab $w={102} $on $green><Svg>{tree.form}</Svg>Login.java<Close mr={3} /></EditorTab>
            <EditorTab $w={86} $green><Svg>{tree.form}</Svg>inf.java<Close mr={3} /></EditorTab>
            <EditorTab $w={119} $green><Svg>{tree.main}</Svg>Tarea_2.java<Close mr={3} /></EditorTab>
            <EditorTab $w={104}><Svg>{tree.form}</Svg>Login.java<Close mr={3} /></EditorTab>
            <EditorTab $w={112}><Svg>{tree.cls}</Svg>Cliente.java<Close mr={3} /></EditorTab>
            <EditorTab $w={138}><Svg>{tree.form}</Svg>MenuAdmin.java<Close mr={3} /></EditorTab>
            <EditorTab $w={65}><Svg>{tree.main}</Svg>Proye...</EditorTab>
            <TabNav>
              <NavArrow $flip $c="#55585a" $mr={6} />
              <NavArrow $mr={4} />
              <NavDrop />
              <Restore />
            </TabNav>
          </TabRow>
          <DesignBar>
            <ViewTab $w={63}>Source</ViewTab>
            <ViewTab $w={60} $on>Design</ViewTab>
            <ViewTab $w={63} $ml={1}>History</ViewTab>
            <DesignBtn $w={26} $ml={20} $on><Svg s={20} vb="0 0 20 20"><rect x="1" y="3" width="9" height="11" fill="#f0c890" stroke="#a05a20" strokeDasharray="1 1" /><path d="M9 2l9 9-4 .5 2.500 5-2 1-2.500-5-3 3z" fill="#fff" stroke="#222" strokeWidth=".6" /></Svg></DesignBtn>
            <DesignBtn $w={26} $ml={3}><Svg s={20} vb="0 0 20 20"><rect x="2" y="2" width="11" height="6" fill="#d8dde2" stroke="#8a9096" /><rect x="6" y="10" width="12" height="8" fill="#cfe0f0" stroke="#6d7f90" /><path d="M2 12h3M2 16h3" stroke="#aaa" /></Svg></DesignBtn>
            <DesignBtn $w={26} $ml={7}><Svg s={20} vb="0 0 20 20"><rect x="2" y="6" width="15" height="12" fill="#dfe8f2" stroke="#8a98a8" /><path d="M4 11h9M4 14h7" stroke="#779" /><circle cx="12" cy="5" r="4" fill="#3f7a1e" stroke="#dde" /><circle cx="12" cy="5" r="1.500" fill="#111" /></Svg></DesignBtn>
            {alignIcons.map(([d, ml], i) => (
              <DesignBtn key={i} $ml={ml || 0}><Svg s={18} vb="0 0 18 18"><path d={d} fill="#85888b" stroke="#85888b" strokeWidth="1.500" /></Svg></DesignBtn>
            ))}
            <DesignBtn $ml={17}><Svg s={18} vb="0 0 18 18"><path d="M0 9l5-5v3h8V4l5 5-5 5v-3H5v3z" fill="#8a8e91" /></Svg></DesignBtn>
            <DesignBtn $ml={2}><Svg s={18} vb="0 0 18 18"><path d="M9 0l5 5h-3v8h3l-5 5-5-5h3V5H4z" fill="#8a8e91" /></Svg></DesignBtn>
            <DesignBtn $ml={219} $w={16}><Svg s={10} vb="0 0 12 12"><rect x=".5" y=".5" width="11" height="11" fill="none" stroke="#aaa" /><path d="M2 6h8M6 2v8" stroke="#ddd" strokeWidth="1.500" /></Svg></DesignBtn>
          </DesignBar>
          <Hint>
            <Svg s={14} vb="0 0 14 14"><path d="M7 .5a4.500 4.500 0 0 1 2.500 8.200V10h-5V8.700A4.500 4.500 0 0 1 7 .5z" fill="#f4c820" stroke="#b08a10" strokeWidth=".6" /><path d="M5 11h4v2H5z" fill="#9a9a9a" /></Svg>
            The Navigator window displays a tree hierarchy of components in the opened form.
            <HintClose>x</HintClose>
          </Hint>
          <Canvas>
            <FormFrame>
              <HandLabel $x={172} $y={209}>usuario</HandLabel>
              <GhostLabel $x={130} $y={244}>jLa...</GhostLabel>
              <FormField $x={173} $y={239} $h={23} />
              <HandLabel $x={172} $y={284} $ls={.5}>contraseña</HandLabel>
              <GhostLabel $x={131} $y={314}>jLa...</GhostLabel>
              <FormField $x={173} $y={310} $h={21} />
              <FormButton $x={197} $y={389}><ButtonLabel>ingresar</ButtonLabel></FormButton>
            </FormFrame>
          </Canvas>
        </Panel>

        <Panel $w={345} $right>
          <TabRow>
            <SideTab $w={64} $pl={3} $on>
              <PaletteTabLabel>Palette</PaletteTabLabel><Close />
            </SideTab>
            <Dash />
          </TabRow>
          <PaletteBody>
            <PaletteList>
              {sections.map(([name, items], si) => (
                <React.Fragment key={name}>
                  <SectionHead $first={si === 0}><SectionTri />{name}</SectionHead>
                  <PalGrid>
                    {items.map(([ic, label, full]) => {
                      const item = <PalItem key={label}><Svg>{pal[ic]}</Svg><PalLabel>{label}</PalLabel></PalItem>;
                      return full ? <FullCell key={label}>{item}</FullCell> : item;
                    })}
                  </PalGrid>
                </React.Fragment>
              ))}
            </PaletteList>
            <Track><Thumb /></Track>
          </PaletteBody>
        </Panel>

        <Strip $w={28}>
          <RestoreGlyph><Restore /></RestoreGlyph>
          <StripIcon $mt={13}><Svg s={16} vb="0 0 16 16"><rect x="2" y="1" width="13" height="12" fill="#eef2f7" stroke="#8a98a8" /><path d="M2 4h13M2 7h13M2 10h13M7 1v12" stroke="#5a84c0" /><circle cx="3.500" cy="12" r="3" fill="#3f6ec0" /></Svg></StripIcon>
          <VText $mt={6}>Properties</VText>
        </Strip>
      </Workspace>

      <StatusBar>
        <StatusText>Tarea_2 (run) #2</StatusText>
        <Progress>running...</Progress>
        <StatusClose>x</StatusClose>
        <StatusCell $w={75} $line $pl={6}>(1 more...)</StatusCell>
        <StatusCell $w={124} $line $pl={47}>165:1</StatusCell>
        <StatusCell $w={28} $line $pl={3}>INS</StatusCell>
        <StatusCell $w={102} />
      </StatusBar>

      <Taskbar>
        <Weather>
          <Svg w={26} h={18} vb="0 0 26 18"><defs><linearGradient id="cl" x1="0" x2="0" y1="0" y2="1"><stop offset="0" stopColor="#bcc8f0" /><stop offset="1" stopColor="#eef2f8" /></linearGradient></defs><path d="M5 17a4 4 0 0 1-1-8 6 6 0 0 1 7-5 7 7 0 0 1 10 4 4.500 4.500 0 0 1 0 9z" fill="url(#cl)" /></Svg>
          <WeatherText><span>18°C</span><span>Nublado</span></WeatherText>
        </Weather>
        <TaskIcons>
          <TaskIcon><Svg s={24} vb="0 0 24 24"><path d="M1 1h10.500v10.500H1zM12.500 1H23v10.500H12.500zM1 12.500h10.500V23H1zM12.500 12.500H23V23H12.500z" fill="#1f9ae8" /></Svg></TaskIcon>
          <TaskIcon><Svg s={24} vb="0 0 24 24"><circle cx="14" cy="10" r="7.500" fill="none" stroke="#111" strokeWidth="2.200" /><path d="M9 15l-6 7" stroke="#111" strokeWidth="2.600" /></Svg></TaskIcon>
          <TaskIcon><Svg s={26} vb="0 0 26 26"><ellipse cx="13" cy="13" rx="11" ry="12" fill="none" stroke="#ee3a56" strokeWidth="2" /><ellipse cx="13" cy="13" rx="5.500" ry="10" fill="none" stroke="#ee3a56" strokeWidth="1.600" /></Svg><TaskDot $bar $c="#c42b2b" /></TaskIcon>
          <TaskIcon><Logo s={26} /><TaskDot /></TaskIcon>
          <TaskIcon><Svg s={26} vb="0 0 26 26"><path d="M2 3h9l2 3h11v18H2z" fill="#f5c12e" /><path d="M2 3h9l2 3H2z" fill="#d89c14" /><rect x="9" y="16" width="8" height="5" rx="1" fill="#0f77c8" /></Svg><TaskDot /></TaskIcon>
          <TaskIcon $on $w={38} $ml={3}><Svg s={26} vb="0 0 26 26"><path d="M3 2h8v4H7v5H3z" fill="none" stroke="#c83a1e" strokeWidth="2" strokeDasharray="2 1" /><path d="M11 9l5 9-3 5M15 14l2 4" fill="none" stroke="#7d8a96" strokeWidth="2" /><circle cx="22" cy="16" r="2" fill="none" stroke="#2e8ad8" strokeWidth="1.500" /><circle cx="16" cy="23" r="2" fill="none" stroke="#2e8ad8" strokeWidth="1.500" /></Svg><TaskDot $bar $c="#8a5cc4" /></TaskIcon>
        </TaskIcons>
        <Clock><span>21:59</span><span>30/08/2022</span></Clock>
      </Taskbar>
    </Page>
  );
}
